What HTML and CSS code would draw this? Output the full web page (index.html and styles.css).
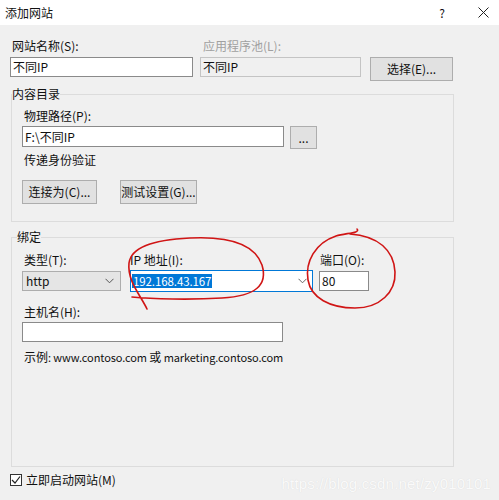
FILE: index.html
```html
<!DOCTYPE html>
<html lang="zh-CN">
<head>
<meta charset="utf-8">
<title>添加网站</title>
<link rel="stylesheet" href="styles.css">
</head>
<body>
<div class="window">
  <div class="titlebar">
    <span class="title">添加网站</span>
    <span class="help">?</span>
    <span class="close"><svg width="11" height="11" viewBox="0 0 11 11"><path d="M0.5 0.5 L10.5 10.5 M10.5 0.5 L0.5 10.5" stroke="#222" stroke-width="1" fill="none"/></svg></span>
  </div>
  <div class="content">
    <div class="site-row">
      <div class="label">网站名称(S):</div>
      <div class="label disabled">应用程序池(L):</div>
      <div></div>
      <div class="textbox">不同IP</div>
      <div class="textbox disabled">不同IP</div>
      <button class="btn btn-choose">选择(E)...</button>
    </div>

    <fieldset class="group group-content">
      <legend class="legend legend-content">内容目录</legend>
      <div class="group-body body-content">
        <div class="label">物理路径(P):</div>
        <div class="path-row">
          <div class="textbox path-box">F:\不同IP</div>
          <button class="btn btn-browse">...</button>
        </div>
        <div class="label auth-label">传递身份验证</div>
        <div class="auth-buttons">
          <button class="btn btn-connect">连接为(C)...</button>
          <button class="btn btn-test">测试设置(G)...</button>
        </div>
      </div>
    </fieldset>

    <fieldset class="group group-binding">
      <legend class="legend legend-binding">绑定</legend>
      <div class="group-body body-binding">
        <div class="binding-grid">
          <div class="label">类型(T):</div>
          <div class="label label-ip">IP 地址(I):</div>
          <div class="label label-port">端口(O):</div>
          <div class="select">
            <span>http</span>
            <svg class="chev" width="9" height="6" viewBox="0 0 9 6"><path d="M0.5 0.8 L4.5 4.8 L8.5 0.8" stroke="#555" stroke-width="1" fill="none"/></svg>
          </div>
          <div class="combo">
            <span class="selected latin">192.168.43.167</span>
            <svg class="chev" width="9" height="6" viewBox="0 0 9 6"><path d="M0.5 0.8 L4.5 4.8 L8.5 0.8" stroke="#666" stroke-width="1" fill="none"/></svg>
          </div>
          <div class="textbox port-box">80</div>
        </div>
        <div class="label host-label">主机名(H):</div>
        <div class="textbox host-box"></div>
        <div class="label example">示例<span class="latin">: www.contoso.com </span>或<span class="latin"> marketing.contoso.com</span></div>
      </div>
    </fieldset>

    <div class="start-row">
      <span class="checkbox"><svg width="10" height="10" viewBox="0 0 10 10"><path d="M1 5 L4 8 L9 1.5" stroke="#222" stroke-width="1.2" fill="none"/></svg></span>
      <span class="label start-label">立即启动网站(M)</span>
    </div>
  </div>

  <svg class="marks" width="499" height="500" viewBox="0 0 499 500">
    <path d="M147 309 C141 296 127 281 129 263 C131 248 150 240 190 238 C230 236 255 245 262 265 C268 285 256 296 222 298 C190 300 152 299 132 297" stroke="#d01515" stroke-width="1.6" fill="none" stroke-linecap="round"/>
    <path d="M357 229 C361 233 346 233 336 236 C315 243 305 262 308 280 C311 298 330 308 355 308 C380 308 396 292 395 272 C394 250 378 236 350 234" stroke="#d01515" stroke-width="1.6" fill="none" stroke-linecap="round"/>
  </svg>
  <div class="watermark">https://blog.csdn.net/zy010101</div>
</div>
</body>
</html>
```
FILE: styles.css
```css
html, body {
  margin: 0;
  padding: 0;
}
body {
  background: #f0f0f0;
  font-family: "Noto Sans CJK SC", "Noto Sans", sans-serif;
  font-size: 12px;
  color: #111;
}
.window {
  position: relative;
  width: 499px;
  height: 500px;
  overflow: hidden;
  background: #f0f0f0;
}
.titlebar {
  height: 25px;
  background: #fff;
  display: flex;
  align-items: center;
}
.title {
  flex: 1;
  padding-left: 5px;
  line-height: 16px;
}
.help {
  width: 12px;
  text-align: center;
  margin-right: 29px;
  font-size: 12px;
}
.close {
  width: 12px;
  margin-right: 10px;
  display: flex;
  justify-content: center;
}
.content {
  padding: 13px 0 0 10px;
}
.label {
  line-height: 16px;
  padding-left: 2px;
  white-space: nowrap;
}
.label.disabled {
  color: #a0a0a0;
  padding-left: 3px;
}
.latin {
  font-size: 11px;
  letter-spacing: -0.1px;
}
.textbox {
  height: 20px;
  box-sizing: border-box;
  border: 1px solid #8a8a8a;
  background: #fff;
  line-height: 18px;
  padding-left: 2px;
  white-space: nowrap;
}
.textbox.disabled {
  background: #f0f0f0;
  border-color: #c4c4c4;
}
.btn {
  height: 24px;
  box-sizing: border-box;
  border: 1px solid #adadad;
  background: #e1e1e1;
  font: inherit;
  color: #111;
  line-height: 22px;
  padding: 0;
  text-align: center;
  white-space: nowrap;
}
.site-row {
  display: grid;
  grid-template-columns: 183px 161px 83px;
  column-gap: 7px;
  row-gap: 3px;
  align-items: start;
}
.btn-choose {
  width: 83px;
  margin-left: 2px;
}
.group {
  margin: 0 0 0 1px;
  padding: 0;
  width: 443px;
  box-sizing: border-box;
  border: 1px solid #dcdcdc;
  min-width: 0;
}
.group-content {
  margin-top: 5px;
}
.group-binding {
  margin-top: 7px;
}
.legend {
  padding: 0;
  line-height: 16px;
}
.legend-binding {
  margin-left: 5px;
}
.group-body {
  padding-left: 10px;
}
.body-content {
  padding-top: 6px;
  padding-bottom: 17px;
}
.path-row {
  display: flex;
  align-items: flex-start;
  margin-top: 2px;
}
.path-box {
  width: 262px;
  height: 21px;
  line-height: 19px;
}
.btn-browse {
  width: 27px;
  height: 23px;
  margin-left: 6px;
  line-height: 19px;
}
.auth-label {
  margin-top: 3px;
}
.auth-buttons {
  display: flex;
  gap: 23px;
  margin-top: 12px;
}
.btn-connect {
  width: 75px;
}
.btn-test {
  width: 77px;
}
.body-binding {
  padding-top: 7px;
  padding-bottom: 101px;
}
.binding-grid {
  display: grid;
  grid-template-columns: 108px 189px 50px;
  row-gap: 2px;
  align-items: center;
}
.label-ip {
  padding-left: 0;
}
.label-port {
  padding-left: 1px;
}
.select {
  width: 99px;
  height: 20px;
  box-sizing: border-box;
  border: 1px solid #adadad;
  background: #e5e5e5;
  display: flex;
  align-items: center;
  justify-content: space-between;
  padding: 0 6px 0 3px;
  line-height: 18px;
}
.combo {
  width: 183px;
  height: 22px;
  box-sizing: border-box;
  border: 1px solid #0078d7;
  background: #fff;
  display: flex;
  align-items: center;
  justify-content: space-between;
  padding: 0 5px 0 1px;
}
.selected {
  background: #0078d7;
  color: #fff;
  line-height: 14px;
  padding: 0 1px;
  font-size: 11.5px;
}
.chev {
  display: block;
}
.port-box {
  width: 50px;
}
.host-label {
  margin-top: 12px;
}
.host-box {
  width: 261px;
  margin-top: 2px;
}
.example {
  margin-top: 7px;
}
.start-row {
  display: flex;
  align-items: center;
  margin-top: 5px;
}
.checkbox {
  width: 12px;
  height: 12px;
  box-sizing: border-box;
  border: 1px solid #333;
  background: #fff;
  display: flex;
  align-items: center;
  justify-content: center;
}
.start-label {
  padding-left: 4px;
}
.marks {
  position: absolute;
  left: 0;
  top: 0;
  pointer-events: none;
}
.watermark {
  position: absolute;
  right: 8px;
  bottom: 8px;
  font-family: "Liberation Sans", sans-serif;
  font-size: 15px;
  color: #fafafa;
  text-shadow: 0 0 1px #d6d6d6;
  letter-spacing: 0.2px;
}
```
